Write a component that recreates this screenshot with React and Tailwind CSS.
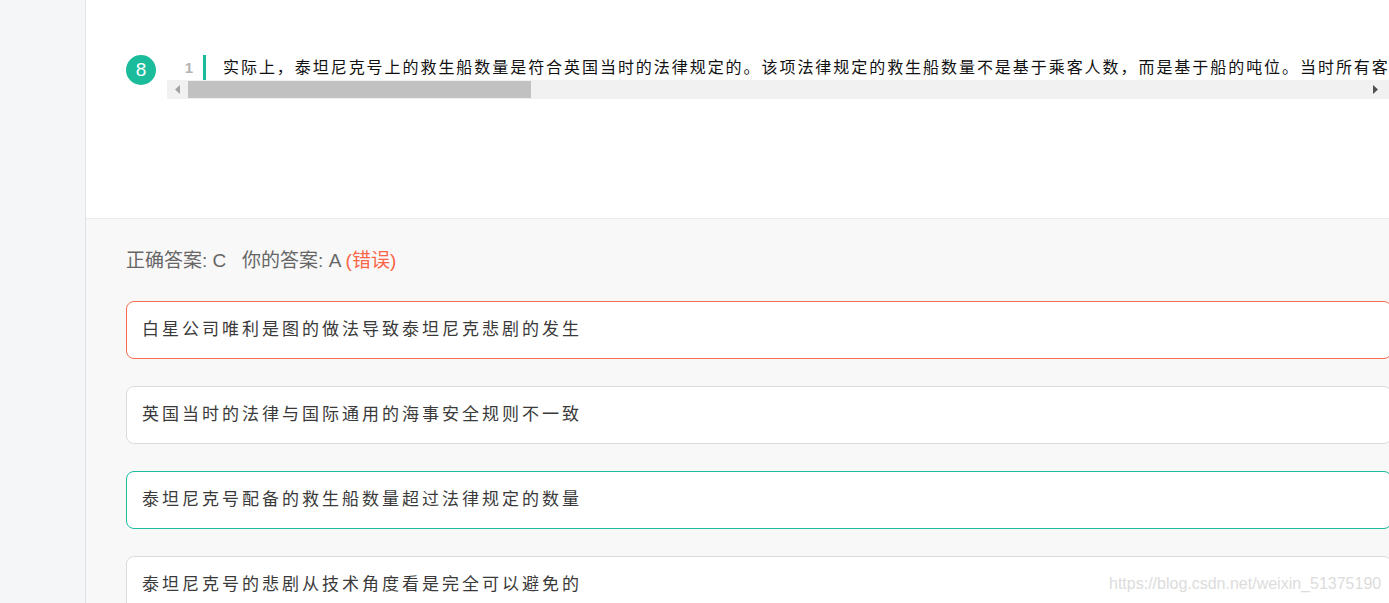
import React from "react";

const font = { fontFamily: '"Liberation Sans", "Noto Sans CJK SC", sans-serif' };

export default function App() {
  const options = [
    { text: "白星公司唯利是图的做法导致泰坦尼克悲剧的发生", border: "border-[#f96c50]" },
    { text: "英国当时的法律与国际通用的海事安全规则不一致", border: "border-[#dcdcdc]" },
    { text: "泰坦尼克号配备的救生船数量超过法律规定的数量", border: "border-[#1abc9c]" },
    { text: "泰坦尼克号的悲剧从技术角度看是完全可以避免的", border: "border-[#dcdcdc]" },
  ];
  return (
    <div className="relative w-[1389px] h-[603px] overflow-hidden flex bg-white" style={font}>
      <div className="w-[86px] shrink-0 bg-[#f5f6f8] border-r border-[#e2e3e5]" />
      <div className="flex-1 min-w-0 flex flex-col overflow-hidden">
        <div className="h-[219px] shrink-0 bg-white border-b border-[#ececec] pt-[55px] pl-[40px] flex items-start">
          <div className="w-[30px] h-[30px] shrink-0 rounded-full bg-[#1abc9c] text-white text-[19px] flex items-center justify-center">
            8
          </div>
          <div className="ml-[11px] w-[1222px] shrink-0 overflow-hidden">
            <div className="h-[25px] flex items-stretch">
              <div className="w-[36px] shrink-0 text-right pr-[10px] text-[15px] leading-[25px] text-[#b5b5b5] font-bold">
                1
              </div>
              <div className="w-[3px] shrink-0 bg-[#1abc9c]" />
              <div className="pl-[17px] whitespace-nowrap text-[16px] leading-[25px] tracking-[1.95px] text-[#111]">
                实际上，泰坦尼克号上的救生船数量是符合英国当时的法律规定的。该项法律规定的救生船数量不是基于乘客人数，而是基于船的吨位。当时所有客
              </div>
            </div>
            <div className="h-[19px] bg-[#f1f1f1] flex items-center">
              <div className="w-[21px] h-full flex items-center justify-center">
                <svg width="6" height="9" viewBox="0 0 6 9"><path d="M5 0 L0 4.5 L5 9 Z" fill="#a3a3a3" /></svg>
              </div>
              <div className="w-[343px] h-[17px] bg-[#c1c1c1]" />
              <div className="flex-1" />
              <div className="w-[21px] h-full flex items-center justify-center mr-[4px]">
                <svg width="6" height="9" viewBox="0 0 6 9"><path d="M1 0 L6 4.5 L1 9 Z" fill="#505050" /></svg>
              </div>
            </div>
          </div>
        </div>
        <div className="flex-1 bg-[#f8f8f8] pt-[30px] pl-[40px]">
          <div className="text-[19px] leading-[24px] text-[#666]">
            正确答案: C&nbsp;&nbsp; 你的答案: A <span className="text-[#fa6547]">(错误)</span>
          </div>
          <div className="mt-[28px] flex flex-col gap-[27px]">
            {options.map((o, i) => (
              <div
                key={i}
                className={`w-[1266px] h-[58px] shrink-0 bg-white border ${o.border} rounded-[8px] pl-[15px] flex items-center text-[17px] tracking-[3px] text-[#3a3a3a]`}
              >
                {o.text}
              </div>
            ))}
          </div>
        </div>
      </div>
      <div className="absolute left-[1109px] top-[572px] text-[16px] text-[#dcdcdc] whitespace-nowrap pointer-events-none">
        https://blog.csdn.net/weixin_51375190
      </div>
    </div>
  );
}
